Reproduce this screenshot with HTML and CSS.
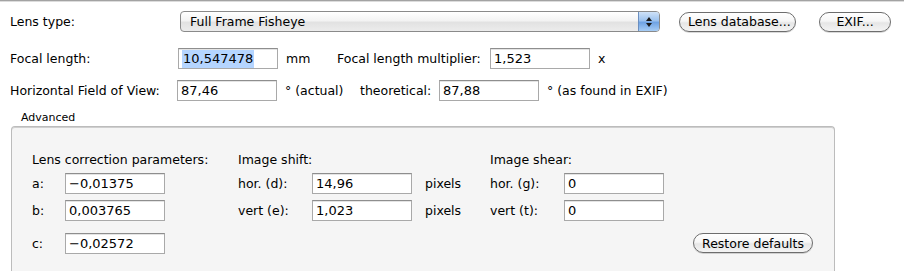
FILE: index.html
```html
<!DOCTYPE html>
<html lang="en">
<head>
    <meta charset="UTF-8">
    <title>Lens settings</title>
    <link rel="stylesheet" href="styles.css">
</head>
<body>

    <div class="panel">
        <div class="row row-lens">
            <span class="label lens-label">Lens type:</span>
            <div class="popup">
                <span class="popup-text">Full Frame Fisheye</span>
                <span class="popup-arrows">
                    <svg width="8" height="12" viewBox="0 0 8 12">
                        <path d="M4 1 L7 5 L1 5 Z" fill="#1a1a1a"/>
                        <path d="M4 11 L7 7 L1 7 Z" fill="#1a1a1a"/>
                    </svg>
                </span>
            </div>
            <button class="pill btn-db">Lens database...</button>
            <button class="pill btn-exif">EXIF...</button>
        </div>

        <div class="row row-focal">
            <span class="label focal-label">Focal length:</span>
            <div class="field"><span class="selected">10,547478</span></div>
            <span class="unit unit-mm">mm</span>
            <span class="label mult-label">Focal length multiplier:</span>
            <div class="field">1,523</div>
            <span class="unit">x</span>
        </div>

        <div class="row row-fov">
            <span class="label fov-label">Horizontal Field of View:</span>
            <div class="field">87,46</div>
            <span class="unit unit-actual">° (actual)</span>
            <span class="label theo-label">theoretical:</span>
            <div class="field">87,88</div>
            <span class="unit">° (as found in EXIF)</span>
        </div>

        <div class="adv-title">Advanced</div>
        <div class="group">
            <div class="grid">
                <span class="head head-lens">Lens correction parameters:</span>
                <span class="head head-shift">Image shift:</span>
                <span class="head head-shear">Image shear:</span>

                <span class="glabel">a:</span>
                <div class="field">−0,01375</div>
                <span></span>
                <span class="glabel">hor. (d):</span>
                <div class="field">14,96</div>
                <span class="glabel px">pixels</span>
                <span class="glabel">hor. (g):</span>
                <div class="field">0</div>
                <span></span>
                <span></span>

                <span class="glabel">b:</span>
                <div class="field">0,003765</div>
                <span></span>
                <span class="glabel">vert (e):</span>
                <div class="field">1,023</div>
                <span class="glabel px">pixels</span>
                <span class="glabel">vert (t):</span>
                <div class="field">0</div>
                <span></span>
                <span></span>

                <span class="glabel row-c">c:</span>
                <div class="field row-c">−0,02572</div>
                <span></span>
                <span></span>
                <span></span>
                <span></span>
                <span></span>
                <span></span>
                <span></span>
                <button class="pill btn-restore">Restore defaults</button>
            </div>
        </div>
    </div>

</body>
</html>
```

FILE: styles.css
```css
body {
    margin: 0;
    background-color: #ffffff;
    font-family: "DejaVu Sans", sans-serif;
    font-size: 12.5px;
    color: #000;
    overflow: hidden;
}
.panel {
    height: 271px;
    overflow: hidden;
    box-sizing: border-box;
    border-top: 1px solid #a3a3a3;
    box-shadow: inset 0 1px 0 #dcdcdc;
    padding-top: 10px;
}
.row {
    display: flex;
    align-items: center;
    height: 21px;
    white-space: nowrap;
}
.label {
    flex: none;
}
.lens-label {
    width: 170px;
    padding-left: 10px;
}
.focal-label {
    width: 168px;
    padding-left: 10px;
}
.fov-label {
    width: 167px;
    padding-left: 10px;
}
.row-focal {
    margin-top: 16px;
}
.row-fov {
    margin-top: 11px;
}
.field {
    flex: none;
    box-sizing: border-box;
    width: 100px;
    height: 21px;
    line-height: 19px;
    padding-left: 3px;
    background-color: #fff;
    border: 1px solid #a9a9a9;
    border-top-color: #8e8e8e;
    box-shadow: inset 0 1px 0 #e4e4e4;
    font-size: 13px;
}
.selected {
    background-color: #b5d5ff;
    padding: 1px 1px 2px 1px;
}
.unit {
    padding-left: 8px;
}
.unit-mm {
    width: 51px;
}
.mult-label {
    width: 153px;
}
.unit-actual {
    width: 75px;
}
.theo-label {
    width: 79px;
}

/* popup button */
.popup {
    flex: none;
    display: flex;
    width: 480px;
    height: 21px;
    box-sizing: border-box;
    border: 1px solid #8a8a8a;
    border-radius: 4px;
    background: linear-gradient(#ffffff, #f3f3f3 45%, #e2e2e2 55%, #ececec);
    overflow: hidden;
}
.popup-text {
    flex: 1;
    padding-left: 9px;
    line-height: 19px;
}
.popup-arrows {
    width: 20px;
    display: flex;
    align-items: center;
    justify-content: center;
    border-left: 1px solid #6b8fc0;
    background: linear-gradient(#cfe2f8, #9cc2ee 45%, #6fa3e4 55%, #a7cdf5);
}

/* pill buttons */
.pill {
    font-family: "DejaVu Sans", sans-serif;
    font-size: 12.5px;
    color: #000;
    height: 20px;
    padding: 0 8px;
    border: 1px solid #6d6d6d;
    border-radius: 10px;
    background: linear-gradient(#ffffff, #f6f6f6 45%, #e6e6e6 55%, #f4f4f4);
    box-shadow: 0 1px 0 rgba(0, 0, 0, 0.15);
    white-space: nowrap;
}
.btn-db {
    margin-left: 19px;
    width: 117px;
}
.btn-exif {
    margin-left: 23px;
    width: 72px;
}

/* advanced box */
.adv-title {
    margin-top: 10px;
    padding-left: 21px;
    font-size: 11px;
    height: 14px;
    line-height: 14px;
}
.group {
    margin: 1px 0 0 11px;
    width: 824px;
    height: 145px;
    box-sizing: border-box;
    background-color: #f5f5f5;
    border: 1px solid #bcbcbc;
    border-bottom: none;
    border-radius: 4px 4px 0 0;
    box-shadow: inset 0 1px 0 #cfcfcf;
    padding: 24px 0 0 20px;
}
.grid {
    display: grid;
    grid-template-columns: 33px 100px 73px 74px 100px 78px 74px 100px 29px auto;
    grid-template-rows: 16px 21px 21px 27px;
    row-gap: 6px;
    align-items: center;
    white-space: nowrap;
}
.head-lens {
    grid-column: 1 / 4;
}
.head-shift {
    grid-column: 4 / 7;
}
.head-shear {
    grid-column: 7 / 11;
}
.glabel.px {
    padding-left: 13px;
}
.glabel.row-c {
    align-self: end;
    line-height: 21px;
}
.field.row-c {
    align-self: end;
}
.btn-restore {
    justify-self: start;
    align-self: end;
    margin-bottom: 1px;
    width: 120px;
    padding: 0 4px;
}
```
